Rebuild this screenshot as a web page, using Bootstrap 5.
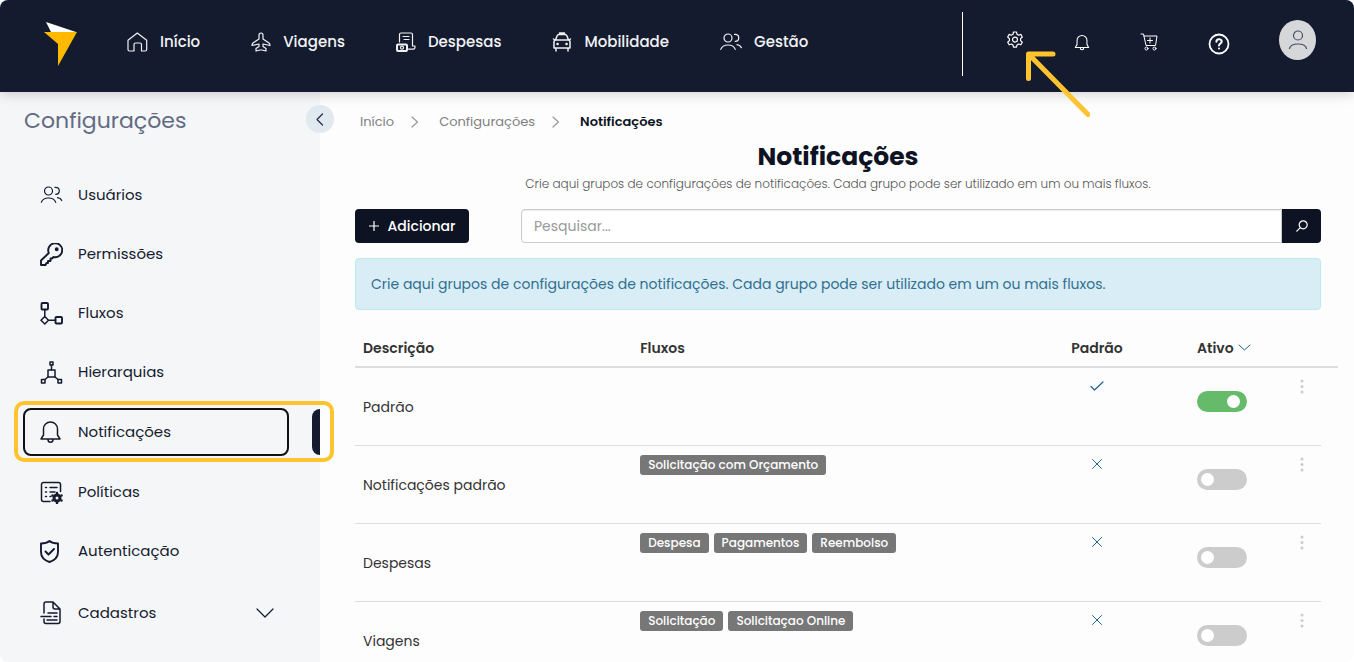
<!DOCTYPE html>
<html lang="pt-BR">
<head>
<meta charset="utf-8">
<meta name="viewport" content="width=device-width, initial-scale=1">
<title>Notificações</title>
<link rel="stylesheet" href="https://cdn.jsdelivr.net/npm/bootstrap@5.3.0/dist/css/bootstrap.min.css">
<style>
:root { --navy: #141b2f; --ink: #0e1324; --yellow: #fec42f; --page: #fdfdfd; --side: #f5f6f8; }
body { font-family: Poppins, Inter, "Open Sans", sans-serif; font-size: 14px; line-height: 22px; background: #fff; color: #333; }
a { text-decoration: none; color: inherit; }
svg { display: block; flex: none; }
.ico { fill: none; stroke: currentColor; stroke-width: 1.5; stroke-linecap: round; stroke-linejoin: round; }
.thin { stroke-width: 1.2; }
.hair { stroke-width: 1; }
.bold-line { stroke-width: 1.9; }
.app { background: var(--page); border-radius: 8px; }
.topbar { height: 92px; background: var(--navy); box-shadow: 0 2px 12px rgba(0,0,0,.18); color: #fff; padding: 0 38px 0 44px; z-index: 2; }
.menu { gap: 51px; margin-left: 50px; height: 83px; font-size: 15px; font-weight: 500; color: #f1f2f4; }
.menu a { gap: 12px; }
.tools { height: 80px; }
.divider { width: 1px; height: 64px; background: #fff; margin: 12px 43px 0 0; align-self: flex-start; }
.tool { border: 0; background: none; color: #fff; padding: 0; display: flex; }
.tools-row { gap: 50px; }
.avatar { width: 37px; height: 40px; border-radius: 50%; background: #d6d7d9; color: #3f4c69; margin-left: -1px; }
.pointer { position: absolute; left: 4px; top: 9px; pointer-events: none; }
.side { width: 320px; background: var(--side); }
.side-title { font-size: 22px; line-height: 32px; font-weight: 400; color: #626b82; padding: 13px 0 0 24px; }
.collapse-btn { position: absolute; right: -14px; top: 13px; width: 28px; height: 28px; border-radius: 50%; border: 0; background: #e0e8f0; color: #222c42; padding: 0; }
.side-list { padding: 34px 0 0; gap: 11px; font-size: 15px; }
.side-link { height: 48px; margin: 0 31px 0 23px; padding: 0 13px 0 15px; gap: 15px; border: 2px solid transparent; border-radius: 8px; color: var(--navy); }
.current { margin: 1px 0 1px; }
.current .side-link { border-color: #111; background: var(--side); }
.marker { position: absolute; right: 0; top: 1px; width: 8px; height: 46px; background: var(--navy); border-radius: 8px 0 0 8px; }
.callout-frame { position: absolute; left: 14px; right: -14px; top: -7px; bottom: -6px; border: 4px solid var(--yellow); border-radius: 10px; pointer-events: none; }
.group .side-link { height: 54px; }
.content { padding: 18px 16px 0 35px; }
.inner { margin-right: 17px; }
.crumbs { font-size: 13px; line-height: 24px; color: #808080; padding-left: 5px; gap: 16px; }
.crumbs li { gap: 17px; }
.crumbs .ico { color: #999; }
.crumbs .here { color: var(--ink); font-weight: 600; }
.title { font-size: 25px; line-height: 32px; font-weight: 700; color: var(--ink); margin: 7px 0 0; }
.lead-text { font-size: 12px; line-height: 22px; font-weight: 300; color: #555; margin: 0 0 14px; }
.act { background: var(--ink); color: #fff; border: 0; height: 34px; }
.add { width: 114px; border-radius: 4px; font-weight: 500; gap: 9px; margin-right: 52px; }
.search .form-control { height: 34px; border: 1px solid #ccc; border-radius: 4px 0 0 4px; font-size: 14px; line-height: 20px; padding: 0 12px; box-shadow: inset 0 1px 1px rgba(0,0,0,.08); }
.search .form-control::placeholder { color: #999; }
.search .act { width: 39px; border-radius: 0 4px 4px 0; }
.note { background: #d9edf7; border: 1px solid #bce8f1; color: #31708f; border-radius: 4px; padding: 14px 15px; margin: 15px 0 19px; }
.grid { table-layout: fixed; width: 100%; }
.grid th { height: 38px; border-bottom: 2px solid #ddd; font-weight: 600; padding: 0 8px; vertical-align: middle; }
.grid td { height: 78px; border-bottom: 1px solid #ddd; padding: 9px 8px 8px; vertical-align: top; }
.grid td.name { vertical-align: middle; }
.grid td.edge { border: 0; }
.flag { color: #23638d; padding-top: 12px !important; }
.tag { background: #777; color: #fff; border-radius: 3px; font-size: 12px; line-height: 20px; font-weight: 500; padding: 0 8px; }
.tags { gap: 5px; }
.grid .toggle { width: 50px; height: 21px; margin: 14px 0 0; border: 0; border-radius: 11px; background: #ccc; appearance: none; display: block; padding: 4px 3px; }
.grid .toggle::before { content: ""; display: block; width: 13px; height: 13px; border-radius: 50%; background: #fff; margin-left: 1px; }
.grid .toggle:checked { background: #66bb6a; }
.grid .toggle:checked::before { margin-left: 27px; }
.grid td.more { padding-left: 6px; }
.kebab { border: 0; background: none; padding: 2px 0; color: #ccc; display: block; width: 20px; }
</style>
</head>
<body>
<svg width="0" height="0" class="position-absolute" aria-hidden="true">
  <defs>
    <symbol id="people" viewBox="0 0 22 18"><circle cx="8" cy="5" r="4"/><path d="M.8 16.4c1-3 3.600-4.400 7.200-4.400s6.300 1.400 7.200 4.400M14.500 1.400c2.300-.4 4.300 1 4.300 3.300s-1.600 3.600-3.600 3.600M17 11.600c2.200.3 3.600 1.500 4.400 3"/></symbol>
    <symbol id="bell" viewBox="0 0 22 24"><path d="M1.500 19 4 15V9a7 7 0 0 1 14 0v6l2.500 4zM8.500 19.500a2.500 2.800 0 0 0 5 0"/></symbol>
    <symbol id="dots" viewBox="0 0 4 16"><circle cx="2" cy="2" r="1.500"/><circle cx="2" cy="7.500" r="1.500"/><circle cx="2" cy="13" r="1.500"/></symbol>
    <symbol id="cross" viewBox="0 0 12 12"><path d="m1.500 1.500 9 9m0-9-9 9"/></symbol>
    <symbol id="chev" viewBox="0 0 8 12"><path d="m1 1 5.500 5L1 11"/></symbol>
  </defs>
</svg>
<div class="app vh-100 d-flex flex-column overflow-hidden">
  <header class="topbar d-flex position-relative flex-shrink-0">
    <a href="#" aria-label="Página inicial" class="mt-3 pt-1"><svg width="33" height="46" viewBox="0 0 33 46"><path d="m2 2 30 10H7z" fill="#fff"/><path d="M0 12h33L14 46V24z" fill="#ffb900"/></svg></a>
    <nav class="menu d-flex align-items-center">
      <a href="#" class="d-flex align-items-center"><svg class="ico thin" width="21" height="20" viewBox="0 0 21 20"><path d="M1 8.300 10.300 1 19.700 8.300V17.500a1.500 1.500 0 0 1-1.500 1.500h-3.700v-6.500a1.500 1.500 0 0 0-1.500-1.500H8.500A1.500 1.500 0 0 0 7 12.500V19H2.500A1.500 1.500 0 0 1 1 17.500z"/></svg>Início</a>
      <a href="#" class="d-flex align-items-center"><svg class="ico thin" width="20" height="20" viewBox="0 0 20 20"><path d="M8 3.500C8 1.500 9 1 10 1s2 .5 2 2.500V7l6 4c1 .7 1 1.300 1 2.500l-7-1.500v2.500l3 2V19l-4-1h-2l-4 1v-2.500l3-2V12l-7 1.500c0-1.200 0-1.800 1-2.500l6-4z"/></svg>Viagens</a>
      <a href="#" class="d-flex align-items-center"><svg class="ico thin" width="20" height="20" viewBox="0 0 20 20"><path d="M3.500 10V2.500C3.500 1.500 4 1 5 1h10c1 0 1.500.5 1.500 1.500V14H19v1.500c0 1-.8 1.700-1.800 1.700H12M7 4.500h6M8 7.500h5"/><rect x="1" y="12.500" width="10" height="6.500" rx="1" stroke-width="2"/><circle cx="6" cy="15.700" r="1.500"/></svg>Despesas</a>
      <a href="#" class="d-flex align-items-center"><svg class="ico" width="20" height="20" viewBox="0 0 19 20"><path d="M3 8 4.500 4C5 3 5.500 2.500 6.500 2.500h6c1 0 1.500.5 2 1.500L16 8M7 2V1h5v1M1 7l1.500 1h14L18 7M1.500 10c0-1.300.7-2 2-2h12c1.300 0 2 .7 2 2v6h-16zM3.500 16v3M15.500 16v3"/><path d="M5 12h.1M14 12h.1" stroke-width="2.500"/></svg>Mobilidade</a>
      <a href="#" class="d-flex align-items-center"><svg class="ico thin" width="22" height="18"><use href="#people"/></svg>Gestão</a>
    </nav>
    <div class="tools d-flex ms-auto">
      <span class="divider"></span>
      <div class="tools-row d-flex align-items-center">
        <div class="position-relative">
          <button class="tool" aria-label="Configurações"><svg class="ico thin" width="18" height="18" viewBox="0 0 18 18"><path d="M7.500 1h3l.5 2.300 1.600.9 2.200-.8 1.500 2.600-1.700 1.600v2l1.700 1.600-1.500 2.600-2.200-.8-1.600.9-.5 2.300h-3L7 13.900l-1.600-.9-2.200.8-1.500-2.600 1.700-1.600v-2L1.700 6l1.500-2.600 2.200.8L7 3.300z"/><circle cx="9" cy="8.600" r="2.500"/></svg></button>
          <svg class="pointer" width="80" height="90" viewBox="0 0 80 90" fill="none" stroke="#fec42f" stroke-width="5" stroke-linecap="round" stroke-linejoin="round"><path d="M43 14H18.500v24.500M19 14.500 78 74.500"/></svg>
        </div>
        <button class="tool mt-1" aria-label="Avisos"><svg class="ico" width="16" height="17" viewBox="0 0 22 24"><use href="#bell"/></svg></button>
        <button class="tool mt-1" aria-label="Carrinho"><svg class="ico hair" width="18" height="18" viewBox="0 0 18 18"><path d="M1 1h2.500L6 12.500h9.500L17 3H4M10 5v5M7.500 7.500h5"/><circle cx="6.500" cy="15.500" r="1.500"/><circle cx="14.500" cy="15.500" r="1.500"/></svg></button>
        <button class="tool mt-1 pt-1" aria-label="Ajuda"><svg class="ico" width="22" height="22" viewBox="0 0 22 22"><circle cx="11" cy="11" r="9.500" stroke-width="1.800"/><path d="M8.400 8.700c0-3.300 5.300-3.200 5.300-.2 0 1.900-2.700 2-2.700 3.900M11 15.500v.1" stroke-width="2"/></svg></button>
        <button class="tool avatar align-items-center justify-content-center" aria-label="Perfil"><svg class="ico thin" width="20" height="20" viewBox="0 0 20 20"><circle cx="10" cy="5.500" r="4.500"/><path d="M1.500 18.500c.8-3.500 4-4.500 8.500-4.500s7.700 1 8.500 4.500"/></svg></button>
      </div>
    </div>
  </header>
  <div class="d-flex flex-grow-1">
    <aside class="side position-relative flex-shrink-0">
      <h2 class="side-title m-0">Configurações</h2>
      <button class="collapse-btn d-flex align-items-center justify-content-center" aria-label="Recolher menu"><svg class="ico thin" width="8" height="13" viewBox="0 0 8 13"><path d="M6.500 1 1 6.500l5.500 5.500"/></svg></button>
      <ul class="side-list list-unstyled d-flex flex-column m-0">
        <li><a href="#" class="side-link d-flex align-items-center"><svg class="ico thin" width="23" height="18" viewBox="0 0 22 18"><use href="#people"/></svg>Usuários</a></li>
        <li><a href="#" class="side-link d-flex align-items-center"><svg class="ico bold-line" width="23" height="23" viewBox="0 0 23 23"><path d="M8.800 10A7 7 0 1 1 13.500 14L12 15.500h-1.500V18H8v2H6.500l-1 2H1v-4.500z"/><circle cx="16.700" cy="6.200" r="1" fill="currentColor"/></svg>Permissões</a></li>
        <li><a href="#" class="side-link d-flex align-items-center"><svg class="ico bold-line" width="23" height="23" viewBox="0 0 23 23"><rect x="1.500" y="1" width="6.500" height="6.500" rx="1"/><rect x="15.500" y="15" width="6.500" height="6.500" rx="1"/><path d="M4.800 7.500v7L1 18.300 4.800 22l3.700-3.700-3.700-3.800M8.500 18.300h7" stroke-width="1.500"/></svg>Fluxos</a></li>
        <li><a href="#" class="side-link d-flex align-items-center"><svg class="ico" width="23" height="23" viewBox="0 0 23 23"><rect x="10" y="1" width="3" height="3"/><rect x="8" y="9" width="7" height="7"/><rect x="1.500" y="18.500" width="3.500" height="3.500"/><rect x="18" y="18.500" width="3.500" height="3.500"/><path d="M11.500 4v5M8 16l-3 2.500M15 16l3 2.500"/></svg>Hierarquias</a></li>
        <li class="current position-relative"><a href="#" aria-current="page" class="side-link d-flex align-items-center"><svg class="ico" width="23" height="24" viewBox="1 0 22 24"><use href="#bell" width="22" height="24"/></svg>Notificações</a><span class="marker"></span><span class="callout-frame"></span></li>
        <li><a href="#" class="side-link d-flex align-items-center"><svg class="ico" width="23" height="23" viewBox="0 0 23 23"><path d="M10 20.500H3.500a2 2 0 0 1-2-2v-15a2 2 0 0 1 2-2h15a2 2 0 0 1 2 2v7M10 6.500h7M10 11h5M5.500 6.500h1M5.500 11h1M5.500 15.500h1M10 15.500h1"/><circle cx="17" cy="17" r="3" stroke-width="3"/><path d="M17 12v-.1M17 22v.1M12.500 14.500v.1M21.500 14.500v.1M12.500 19.500v.1M21.500 19.500v.1" stroke-width="2.500"/></svg>Políticas</a></li>
        <li><a href="#" class="side-link d-flex align-items-center"><svg class="ico bold-line" width="23" height="23" viewBox="1 0 23 23"><path d="M10.500 1c2 1.700 5 2.500 8.500 2.500v8.500c0 5-4 8.500-8.500 10C6 20.500 2 17 2 12V3.500C5.500 3.500 8.500 2.700 10.500 1zM6.500 11.500l3 3L15 9"/></svg>Autenticação</a></li>
        <li class="group"><a href="#" class="side-link d-flex align-items-center"><svg class="ico" width="23" height="24" viewBox="0 0 23 24"><path d="M4 12V3a2 2 0 0 1 2-2h7l7 7v12.500a2 2 0 0 1-2 2H6a2 2 0 0 1-2-2V18M13 1v5a2 2 0 0 0 2 2h5M1 15.500h10M8 12h9M14 15.500h3M7 19h10"/></svg>Cadastros<svg class="ico thin ms-auto" width="18" height="10" viewBox="0 0 18 10"><path d="m1 1 8 8 8-8"/></svg></a></li>
      </ul>
    </aside>
    <main class="content flex-grow-1">
      <div class="inner">
        <ol class="crumbs list-unstyled d-flex m-0">
          <li class="d-flex align-items-center"><a href="#">Início</a><svg class="ico thin" width="8" height="12"><use href="#chev"/></svg></li>
          <li class="d-flex align-items-center ms-1"><a href="#">Configurações</a><svg class="ico thin" width="8" height="12"><use href="#chev"/></svg></li>
          <li class="here ms-1" aria-current="page">Notificações</li>
        </ol>
        <h1 class="title text-center">Notificações</h1>
        <p class="lead-text text-center">Crie aqui grupos de configurações de notificações. Cada grupo pode ser utilizado em um ou mais fluxos.</p>
        <div class="d-flex">
          <button class="act add d-flex align-items-center justify-content-center"><svg class="ico thin" width="10" height="10" viewBox="0 0 10 10"><path d="M5 0v10M0 5h10"/></svg>Adicionar</button>
          <form class="search d-flex flex-grow-1">
            <input type="text" class="form-control" placeholder="Pesquisar..." aria-label="Pesquisar">
            <button type="button" class="act d-flex align-items-center justify-content-center flex-shrink-0" aria-label="Buscar"><svg class="ico thin" width="12" height="12" viewBox="0 0 12 12"><circle cx="7.200" cy="4.800" r="4"/><path d="M4.300 7.700.8 11.200"/></svg></button>
          </form>
        </div>
        <div class="note" role="note">Crie aqui grupos de configurações de notificações. Cada grupo pode ser utilizado em um ou mais fluxos.</div>
      </div>
      <table class="grid">
        <colgroup><col style="width:28.200%"><col><col style="width:68px"><col style="width:58px"><col style="width:97px"><col style="width:35px"><col style="width:17px"></colgroup>
        <thead><tr><th scope="col">Descrição</th><th scope="col">Fluxos</th><th scope="col" class="text-center px-0">Padrão</th><th></th><th scope="col"><span class="d-flex align-items-center gap-1">Ativo<svg class="ico hair" width="13" height="7" viewBox="0 0 13 7" color="#23638d"><path d="m1 1 5.500 5L12 1"/></svg></span></th><th colspan="2"></th></tr></thead>
        <tbody>
          <tr><td class="name">Padrão</td><td></td><td class="flag"><svg class="ico thin mx-auto" width="14" height="12" viewBox="0 0 14 12" role="img" aria-label="Sim"><path d="m1 6.500 3.500 3.500L13 2"/></svg></td><td></td><td><input class="toggle" type="checkbox" checked aria-label="Ativo: Padrão"></td><td class="more"><button class="kebab" aria-label="Opções"><svg class="mx-auto" width="4" height="16" fill="currentColor"><use href="#dots"/></svg></button></td><td class="edge"></td></tr>
          <tr><td class="name">Notificações padrão</td><td><div class="tags d-flex"><span class="tag">Solicitação com Orçamento</span></div></td><td class="flag"><svg class="ico hair mx-auto" width="12" height="12" role="img" aria-label="Não"><use href="#cross"/></svg></td><td></td><td><input class="toggle" type="checkbox" aria-label="Ativo: Notificações padrão"></td><td class="more"><button class="kebab" aria-label="Opções"><svg class="mx-auto" width="4" height="16" fill="currentColor"><use href="#dots"/></svg></button></td><td class="edge"></td></tr>
          <tr><td class="name">Despesas</td><td><div class="tags d-flex"><span class="tag">Despesa</span><span class="tag">Pagamentos</span><span class="tag">Reembolso</span></div></td><td class="flag"><svg class="ico hair mx-auto" width="12" height="12" role="img" aria-label="Não"><use href="#cross"/></svg></td><td></td><td><input class="toggle" type="checkbox" aria-label="Ativo: Despesas"></td><td class="more"><button class="kebab" aria-label="Opções"><svg class="mx-auto" width="4" height="16" fill="currentColor"><use href="#dots"/></svg></button></td><td class="edge"></td></tr>
          <tr><td class="name">Viagens</td><td><div class="tags d-flex"><span class="tag">Solicitação</span><span class="tag">Solicitaçao Online</span></div></td><td class="flag"><svg class="ico hair mx-auto" width="12" height="12" role="img" aria-label="Não"><use href="#cross"/></svg></td><td></td><td><input class="toggle" type="checkbox" aria-label="Ativo: Viagens"></td><td class="more"><button class="kebab" aria-label="Opções"><svg class="mx-auto" width="4" height="16" fill="currentColor"><use href="#dots"/></svg></button></td><td class="edge"></td></tr>
        </tbody>
      </table>
    </main>
  </div>
</div>
<script src="https://cdn.jsdelivr.net/npm/bootstrap@5.3.0/dist/js/bootstrap.bundle.min.js"></script>
</body>
</html>
